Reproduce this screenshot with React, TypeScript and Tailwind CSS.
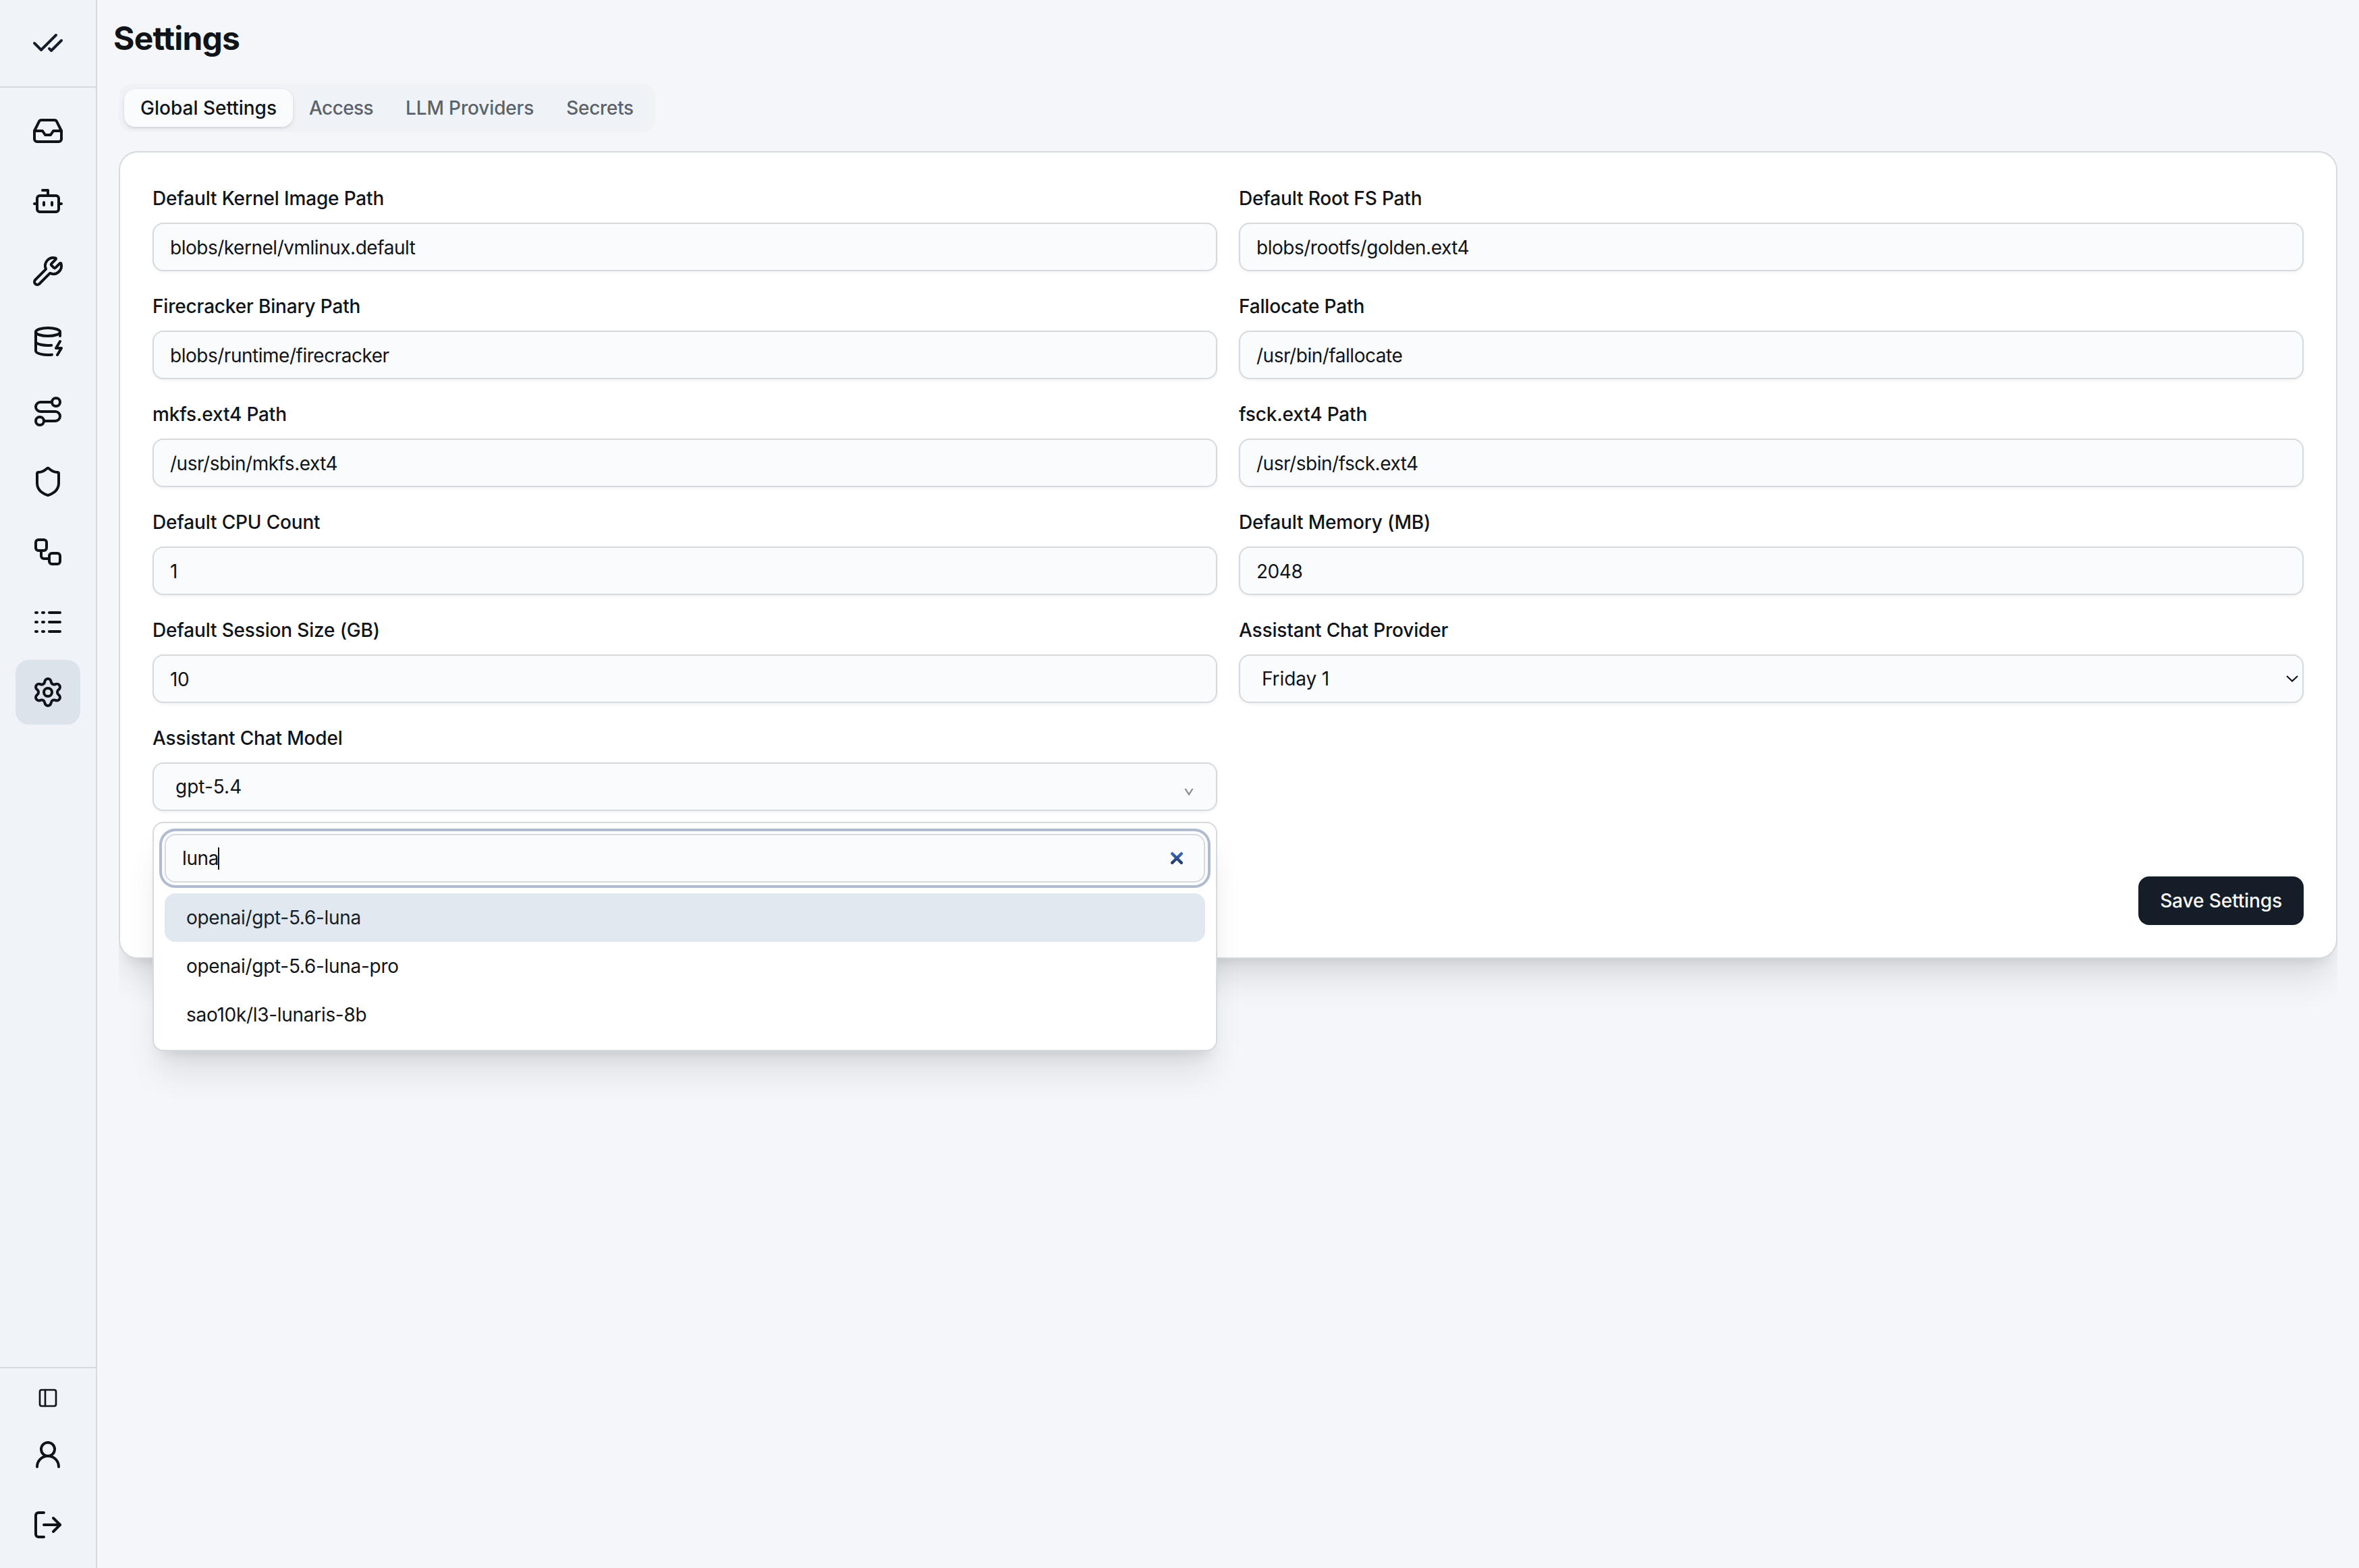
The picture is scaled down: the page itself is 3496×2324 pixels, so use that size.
import { useState } from 'react'
import type { ReactNode } from 'react'
import {
  Bot,
  CheckCheck,
  DatabaseZap,
  Inbox,
  Logs,
  LogOut,
  PanelLeft,
  Route,
  Settings,
  Shield,
  UserRound,
  Workflow,
  Wrench,
} from 'lucide-react'

const NAV_ITEMS = [
  { id: 'inbox', icon: Inbox },
  { id: 'agents', icon: Bot },
  { id: 'tools', icon: Wrench },
  { id: 'data', icon: DatabaseZap },
  { id: 'routes', icon: Route },
  { id: 'policies', icon: Shield },
  { id: 'workflows', icon: Workflow },
  { id: 'logs', icon: Logs },
  { id: 'settings', icon: Settings },
]

const TABS = [
  { label: 'Global Settings', tracking: 'tracking-normal' },
  { label: 'Access', tracking: 'tracking-[-0.6px]' },
  { label: 'LLM Providers', tracking: 'tracking-[-0.15px]' },
  { label: 'Secrets', tracking: 'tracking-[-0.3px]' },
]

const FIELDS = [
  { label: 'Default Kernel Image Path', value: 'blobs/kernel/vmlinux.default' },
  { label: 'Default Root FS Path', value: 'blobs/rootfs/golden.ext4' },
  { label: 'Firecracker Binary Path', value: 'blobs/runtime/firecracker' },
  { label: 'Fallocate Path', value: '/usr/bin/fallocate' },
  { label: 'mkfs.ext4 Path', value: '/usr/sbin/mkfs.ext4' },
  { label: 'fsck.ext4 Path', value: '/usr/sbin/fsck.ext4' },
  { label: 'Default CPU Count', value: '1' },
  { label: 'Default Memory (MB)', value: '2048' },
  { label: 'Default Session Size (GB)', value: '10' },
]

const MODELS = [
  'openai/gpt-5.6-luna',
  'openai/gpt-5.6-luna-pro',
  'sao10k/l3-lunaris-8b',
]

function Sidebar() {
  return (
    <aside className="flex w-36 shrink-0 flex-col border-r-2 border-[#d5dade] bg-[#f0f4f9] text-[#101418]">
      <div className="flex h-[130px] items-center justify-center border-b-2 border-[#d5dade]">
        <CheckCheck className="size-12 text-[#151d28]" />
      </div>
      <nav className="flex flex-1 flex-col items-center gap-2 pt-4">
        {NAV_ITEMS.map(({ id, icon: Icon }) => (
          <button
            aria-label={id}
            className={
              id === 'settings'
                ? 'flex size-24 items-center justify-center rounded-[20px] bg-[#dce3eb]'
                : 'flex size-24 items-center justify-center rounded-[20px]'
            }
            key={id}
            type="button"
          >
            <Icon className="size-12" />
          </button>
        ))}
      </nav>
      <div className="flex flex-col items-center gap-2 border-t-2 border-[#d5dade] py-4">
        <button
          aria-label="Toggle sidebar"
          className="flex size-14 items-center justify-center"
          type="button"
        >
          <PanelLeft className="size-8" />
        </button>
        <button
          aria-label="Profile"
          className="flex size-24 items-center justify-center"
          type="button"
        >
          <UserRound className="size-12" />
        </button>
        <button
          aria-label="Log out"
          className="flex size-24 items-center justify-center"
          type="button"
        >
          <LogOut className="size-12" />
        </button>
      </div>
    </aside>
  )
}

function Field({ label, children }: { label: string; children: ReactNode }) {
  return (
    <div className="relative flex flex-col gap-4">
      <span className="font-medium leading-10 tracking-[-0.17px]">{label}</span>
      {children}
    </div>
  )
}

function ModelMenu({ query }: { query: string }) {
  const [active, setActive] = useState(0)

  return (
    <div className="absolute inset-x-0 top-full z-10 mt-4 flex flex-col gap-4 rounded-2xl border-2 border-[#d5dade] bg-white p-4 shadow-[0_40px_50px_-10px_rgb(0_0_0/0.1),0_16px_20px_-12px_rgb(0_0_0/0.1)]">
      <div className="flex h-[72px] items-center justify-between rounded-2xl border-2 border-[#d5dade] bg-[#fafbfd] pr-[30px] pl-6 ring-4 ring-[#afbccf] ring-offset-4 ring-offset-[#fafbfd]">
        <span className="flex items-center tracking-[-0.4px]">
          {query}
          <span className="-ml-px h-[33px] w-0.5 bg-[#101418]" />
        </span>
        <svg className="size-5" fill="none" viewBox="0 0 20 20">
          <defs>
            <linearGradient
              gradientUnits="userSpaceOnUse"
              id="clear"
              x1="0"
              x2="0"
              y1="1"
              y2="19"
            >
              <stop stopColor="#3d70bd" />
              <stop offset="1" stopColor="#1b3260" />
            </linearGradient>
          </defs>
          <path
            d="M3.2 3.2l13.6 13.6M16.8 3.2L3.2 16.8"
            stroke="url(#clear)"
            strokeLinecap="round"
            strokeWidth="4.4"
          />
        </svg>
      </div>
      <ul className="tracking-[-0.3px]">
        {MODELS.map((model, i) => (
          <li
            className={
              i === active
                ? 'flex h-[72px] items-center rounded-2xl bg-[#e1e8f0] px-8 text-[#151d28]'
                : 'flex h-[72px] items-center rounded-2xl px-8'
            }
            key={model}
            onMouseEnter={() => setActive(i)}
          >
            {model}
          </li>
        ))}
      </ul>
    </div>
  )
}

export default function App() {
  const [tab, setTab] = useState('Global Settings')

  return (
    <div className="flex h-screen bg-[#f4f6fa] font-['Inter',sans-serif] text-[28px] leading-10 text-[#101418]">
      <Sidebar />
      <main className="flex min-w-0 flex-1 flex-col">
        <h1 className="px-6 pt-[25px] font-bold text-[48px] leading-16 tracking-[-0.8px]">
          Settings
        </h1>
        <div className="mx-8 mt-[35px] flex-1 overflow-hidden">
          <div className="flex h-[72px] w-fit rounded-[20px] bg-[#eff3f8] p-2">
            {TABS.map((t) => (
              <button
                className={
                  t.label === tab
                    ? 'rounded-2xl bg-[#fafbfd] px-6 font-medium shadow-[0_2px_6px_rgb(0_0_0/0.1),0_2px_4px_-2px_rgb(0_0_0/0.1)]'
                    : 'rounded-2xl px-6 font-medium text-[#5b626b]'
                }
                key={t.label}
                onClick={() => setTab(t.label)}
                type="button"
              >
                <span className={t.tracking}>{t.label}</span>
              </button>
            ))}
          </div>

          <section className="mt-7 rounded-[28px] border-2 border-[#d5dade] bg-white p-12 shadow-[0_40px_50px_-10px_rgb(0_0_0/0.1),0_16px_20px_-12px_rgb(0_0_0/0.1)]">
            <div className="grid grid-cols-2 gap-8">
              {FIELDS.map((f) => (
                <Field key={f.label} label={f.label}>
                  <div className="flex h-[72px] items-center rounded-2xl border-2 border-[#d5dade] bg-[#fafbfd] px-6 pt-0.5 tracking-[-0.48px] shadow-[0_2px_4px_rgb(0_0_0/0.05)]">
                    {f.value}
                  </div>
                </Field>
              ))}
              <Field label="Assistant Chat Provider">
                <button
                  className="flex h-[72px] items-center justify-between rounded-2xl border-2 border-[#d5dade] bg-[#fafbfd] pr-[5px] pl-8 tracking-[-0.1px] shadow-[0_2px_4px_rgb(0_0_0/0.05)]"
                  type="button"
                >
                  Friday 1
                  <svg
                    className="h-3 w-5"
                    fill="none"
                    stroke="#101418"
                    strokeWidth="2.2"
                    viewBox="0 0 20 12"
                  >
                    <path d="M2 2l8 7.5L18 2" />
                  </svg>
                </button>
              </Field>
              <Field label="Assistant Chat Model">
                <button
                  className="flex h-[72px] items-center justify-between rounded-2xl border-2 border-[#d5dade] bg-[#fafbfd] px-8 shadow-[0_2px_4px_rgb(0_0_0/0.05)]"
                  type="button"
                >
                  gpt-5.4
                  <svg
                    className="mt-4 h-3 w-4"
                    fill="none"
                    stroke="#85888c"
                    strokeWidth="2.2"
                    viewBox="0 0 16 12"
                  >
                    <path d="M2.5 1l5.5 8.5L13.5 1" />
                  </svg>
                </button>
                <ModelMenu query="luna" />
              </Field>
            </div>
            <div className="mt-[97px] flex justify-end">
              <button
                className="h-[72px] rounded-2xl bg-[#151d28] px-8 font-medium tracking-[-0.1px] text-[#fafbfd]"
                type="button"
              >
                Save Settings
              </button>
            </div>
          </section>
        </div>
      </main>
    </div>
  )
}
